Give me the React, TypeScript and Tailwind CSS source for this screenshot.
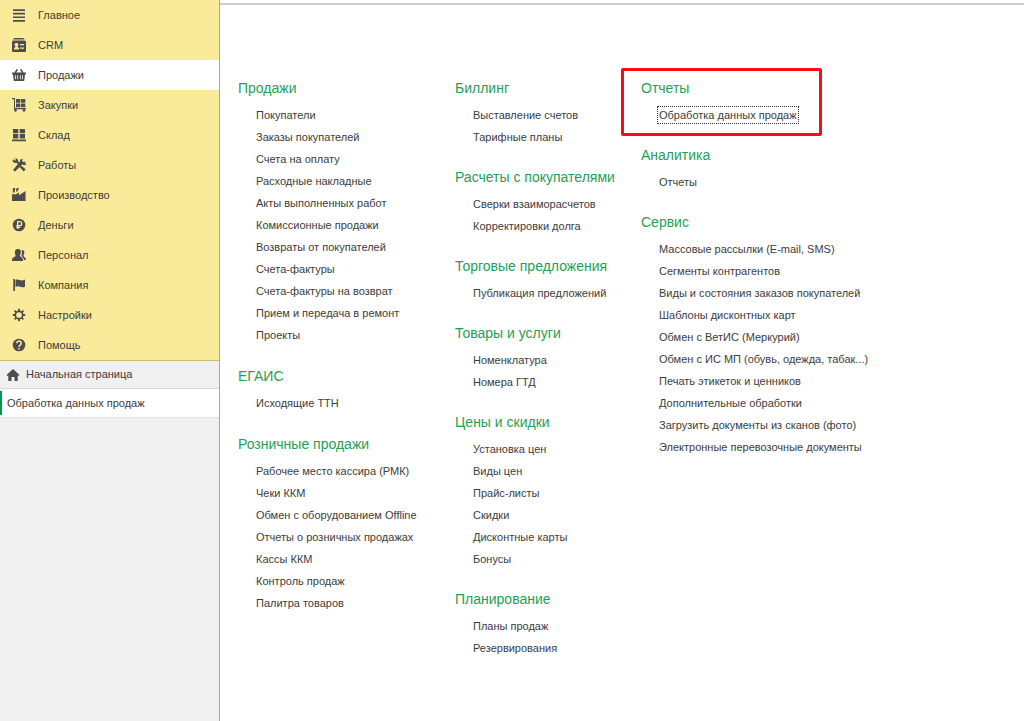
import type { ReactNode } from "react";

const icons: Record<string, ReactNode> = {
  menu: <path d="M1 1.200h12v1.700H1zM1 4.800h12v1.700H1zM1 8.400h12v1.700H1zM1 12h12v1.700H1z" />,
  card: (
    <>
      <path d="M2 0h9.500l.5 1H1.500zM1 1.500h11.500l.5 1H.5z" />
      <path
        fillRule="evenodd"
        d="M1 3h12a1 1 0 0 1 1 1v9a1 1 0 0 1-1 1H1a1 1 0 0 1-1-1V4a1 1 0 0 1 1-1zm3.500 2a1.700 1.700 0 0 0-1 3.200V9L2 10v1.500h5V10L5.500 9v-.8a1.700 1.700 0 0 0-1-3.200zM8 6v1.300h4V6zm0 3.500v1.300h4V9.500z"
      />
    </>
  ),
  basket: (
    <path
      fillRule="evenodd"
      d="M4.500 1 6 1.500 4.300 4.500H9.700L8 1.500 9.500 1l2 3.500H14V6.300h-1L12.200 13H1.800L1 6.300H0V4.500h2.500zM3 7.300l.3 4h.8l-.3-4zm2.300 0v4h.8v-4zm2.600 0v4h.8v-4zm2.300 0-.3 4h.8l.3-4z"
    />
  ),
  cart: (
    <>
      <path d="M0 0h3v10h11v1.300H2V1.300H0z" />
      <path d="M4 1h4.300v3.800H4zM9 1h4.300v3.800H9zM4 5.500h4.300v3.700H4zM9 5.500h4.300v3.700H9z" />
      <circle cx="3.500" cy="12.300" r="1.400" />
      <circle cx="12" cy="12.300" r="1.400" />
    </>
  ),
  boxes: <path d="M1 1h5.300v4.200H1zM7.700 1H13v4.200H7.700zM1 6h5.300v4.500H1zM7.700 6H13v4.500H7.700zM0 11.500h14v1.700H0z" />,
  tools: (
    <>
      <path
        fillRule="evenodd"
        d="M1.500 1.300 3 2.800l1-1L2.800.3c2-.5 3.700 1 3.200 3l2 2-1.500 1.500-2-2C2.500 5.500.2 4 .6 2z"
      />
      <path d="m9 7.500 4.700 3.800-1.900 2.200L7.500 9z" />
      <path
        fillRule="evenodd"
        d="M8 3.500C7.500 1.700 9 .5 11 1l-1 1.700 1.300 1.300 2-.5c.4 2-1 3.500-3 3L3 13.500 1 12z"
      />
      <path d="M11 5.500h3V7h-3z" />
    </>
  ),
  factory: <path d="M1 0h2.300L2.500 4.500H.7zM4.500 0H7L5.500 3.500H4zM0 6.300h4L7 4.500v2.800L13.500 3v10H0z" />,
  ruble: (
    <>
      <circle cx="7" cy="7" r="6.300" />
      <path d="M5.700 11V3.700h2a2 2 0 0 1 0 4H4.300M4.300 9.300h4" fill="none" stroke="#faeb9b" strokeWidth="1.300" />
    </>
  ),
  people: (
    <>
      <path d="M6 1C8 .8 9 2 8.800 4.500 8.700 6 8 6.600 7.800 7.500c.1 1.500 3.200 1.600 3.200 4.500v1H0v-1c0-3 3.600-3 3.700-4.500C3 6.500 2.900 5.700 2.900 4.200 2.900 2.200 4 1 6 1z" />
      <path d="M9.500 2c2.200-.2 3 1 2.800 3-.1 1.300-.8 1.700-.9 2.700.2 1.200 2.600 1.500 2.600 4.300h-2C11.800 9.700 9.800 9 9.300 7.800 10 6.300 10.200 4 9.500 2z" />
    </>
  ),
  flag: <path d="M1.300 1H3v12H1.300zM3.500 2c3-1.800 5 2 9.500-.5v7.300C9 10.500 7 7 3.500 9z" />,
  gear: (
    <g fill="none" stroke="#4d4d4d">
      <circle cx="7" cy="7" r="3.700" strokeWidth="1.700" />
      <path
        d="M7 .8v2.400M7 10.800v2.400M.8 7h2.400M10.800 7h2.400M2.600 2.600l1.700 1.700M9.700 9.700l1.700 1.700M2.600 11.400l1.700-1.700M9.700 4.300l1.700-1.700"
        strokeWidth="1.800"
      />
    </g>
  ),
  help: (
    <>
      <circle cx="7" cy="7" r="6.300" />
      <path d="M4.800 5.300a2.200 2.200 0 1 1 3.400 1.800C7.300 7.700 7 8 7 9M7 10v1.600" fill="none" stroke="#faeb9b" strokeWidth="1.600" />
    </>
  ),
  home: <path d="M7 1l6.500 6-1 1-.8-.7V13H8.500V9h-3v4H2.300V7.300L1.500 8l-1-1z" />,
};

function Icon({ name }: { name: string }) {
  return (
    <svg viewBox="0 0 14 14" className="size-3.5 shrink-0 fill-[#4d4d4d]" aria-hidden="true">
      {icons[name]}
    </svg>
  );
}

const sections = [
  { icon: "menu", label: "Главное" },
  { icon: "card", label: "CRM" },
  { icon: "basket", label: "Продажи", active: true },
  { icon: "cart", label: "Закупки" },
  { icon: "boxes", label: "Склад" },
  { icon: "tools", label: "Работы" },
  { icon: "factory", label: "Производство" },
  { icon: "ruble", label: "Деньги" },
  { icon: "people", label: "Персонал" },
  { icon: "flag", label: "Компания" },
  { icon: "gear", label: "Настройки" },
  { icon: "help", label: "Помощь" },
];

type Group = { title: string; items: string[]; highlighted?: boolean };

const salesGroups: Group[] = [
  {
    title: "Продажи",
    items: [
      "Покупатели",
      "Заказы покупателей",
      "Счета на оплату",
      "Расходные накладные",
      "Акты выполненных работ",
      "Комиссионные продажи",
      "Возвраты от покупателей",
      "Счета-фактуры",
      "Счета-фактуры на возврат",
      "Прием и передача в ремонт",
      "Проекты",
    ],
  },
  { title: "ЕГАИС", items: ["Исходящие ТТН"] },
  {
    title: "Розничные продажи",
    items: [
      "Рабочее место кассира (РМК)",
      "Чеки ККМ",
      "Обмен с оборудованием Offline",
      "Отчеты о розничных продажах",
      "Кассы ККМ",
      "Контроль продаж",
      "Палитра товаров",
    ],
  },
];

const billingGroups: Group[] = [
  { title: "Биллинг", items: ["Выставление счетов", "Тарифные планы"] },
  { title: "Расчеты с покупателями", items: ["Сверки взаиморасчетов", "Корректировки долга"] },
  { title: "Торговые предложения", items: ["Публикация предложений"] },
  { title: "Товары и услуги", items: ["Номенклатура", "Номера ГТД"] },
  {
    title: "Цены и скидки",
    items: ["Установка цен", "Виды цен", "Прайс-листы", "Скидки", "Дисконтные карты", "Бонусы"],
  },
  { title: "Планирование", items: ["Планы продаж", "Резервирования"] },
];

const reportGroups: Group[] = [
  { title: "Отчеты", items: ["Обработка данных продаж"], highlighted: true },
  { title: "Аналитика", items: ["Отчеты"] },
  {
    title: "Сервис",
    items: [
      "Массовые рассылки (E-mail, SMS)",
      "Сегменты контрагентов",
      "Виды и состояния заказов покупателей",
      "Шаблоны дисконтных карт",
      "Обмен с ВетИС (Меркурий)",
      "Обмен с ИС МП (обувь, одежда, табак...)",
      "Печать этикеток и ценников",
      "Дополнительные обработки",
      "Загрузить документы из сканов (фото)",
      "Электронные перевозочные документы",
    ],
  },
];

function LinkGroup({ group }: { group: Group }) {
  return (
    <section className="relative">
      {group.highlighted && (
        <div className="pointer-events-none absolute -top-2 -left-5 h-17 w-[201px] rounded-xs border-3 border-[#fa0a12]" />
      )}
      <h2 className="mb-1 text-sm leading-6 text-[#1fa055]">{group.title}</h2>
      <ul className="pl-[18px]">
        {group.items.map((item) => (
          <li key={item} className="flex h-[22px] items-center">
            <a
              href="#"
              className={
                group.highlighted
                  ? "leading-[14px] outline-1 outline-offset-1 outline-dotted outline-[#333333]"
                  : "leading-[14px] hover:underline"
              }>
              {item}
            </a>
          </li>
        ))}
      </ul>
    </section>
  );
}

function Sidebar() {
  return (
    <aside className="w-[220px] shrink-0 border-r border-[#a6a6a6] bg-[#f0f0f0]">
      <nav className="border-b border-[#c9b96a] bg-[#faeb9b]">
        {sections.map(({ icon, label, active }) => (
          <a
            key={label}
            href="#"
            className={
              active
                ? "flex h-[30px] items-center gap-3 bg-white pl-3"
                : "flex h-[30px] items-center gap-3 pl-3"
            }>
            <Icon name={icon} />
            {label}
          </a>
        ))}
      </nav>
      <a href="#" className="flex h-7 items-center gap-1.5 border-b border-[#d9d9d9] pl-1.5">
        <Icon name="home" />
        Начальная страница
      </a>
      <a href="#" className="flex h-[29px] items-center border-b border-[#e2e2e2] bg-white">
        <span className="mr-[5px] h-6 w-0.5 bg-[#009a4e]" />
        Обработка данных продаж
      </a>
    </aside>
  );
}

export default function App() {
  return (
    <div className="flex min-h-screen bg-white font-['Liberation_Sans',Arial,sans-serif] text-[11px] text-[#3c3c3c]">
      <Sidebar />
      <main className="min-w-0 flex-1 pt-[3px]">
        <div className="flex items-start border-t-2 border-[#cbcbcb] pt-[71px] pl-[18px] whitespace-nowrap">
          <div className="flex w-[217px] flex-col gap-[18px]">
            {salesGroups.map((group) => (
              <LinkGroup key={group.title} group={group} />
            ))}
          </div>
          <div className="flex w-[186px] flex-col gap-[17px]">
            {billingGroups.map((group) => (
              <LinkGroup key={group.title} group={group} />
            ))}
          </div>
          <div className="flex flex-1 flex-col gap-[17px]">
            {reportGroups.map((group) => (
              <LinkGroup key={group.title} group={group} />
            ))}
          </div>
        </div>
      </main>
    </div>
  );
}
